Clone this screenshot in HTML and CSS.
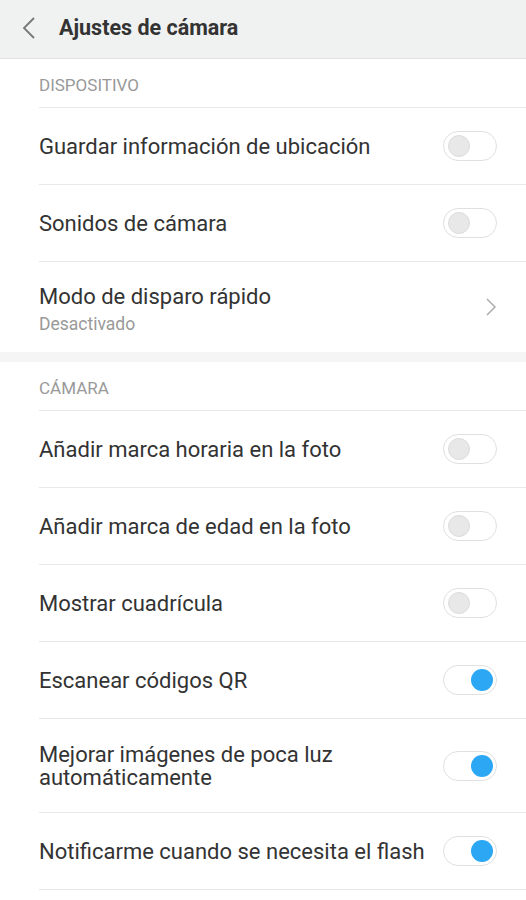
FILE: index.html
```html
<!DOCTYPE html>
<html lang="es">
<head>
  <meta charset="UTF-8">
  <title>Ajustes de cámara</title>
  <link rel="stylesheet" href="styles.css">
</head>
<body>
  <div class="top-bar">
    <svg class="back-icon" width="14" height="22" viewBox="0 0 14 22">
      <path d="M12 1 L2 11 L12 21" fill="none" stroke="#777" stroke-width="1.8"/>
    </svg>
    <h1 class="title">Ajustes de cámara</h1>
  </div>

  <div class="section">
    <div class="section-label">DISPOSITIVO</div>
    <div class="row">
      <span class="row-text">Guardar información de ubicación</span>
      <span class="switch"></span>
    </div>
    <div class="row">
      <span class="row-text">Sonidos de cámara</span>
      <span class="switch"></span>
    </div>
    <div class="row row-tall last">
      <div class="row-stack">
        <div class="row-text">Modo de disparo rápido</div>
        <div class="row-sub">Desactivado</div>
      </div>
      <svg class="chevron" width="10" height="18" viewBox="0 0 10 18">
        <path d="M1 1 L9 9 L1 17" fill="none" stroke="#aaa" stroke-width="1.5"/>
      </svg>
    </div>
  </div>

  <div class="gap"></div>

  <div class="section">
    <div class="section-label">CÁMARA</div>
    <div class="row">
      <span class="row-text">Añadir marca horaria en la foto</span>
      <span class="switch"></span>
    </div>
    <div class="row">
      <span class="row-text">Añadir marca de edad en la foto</span>
      <span class="switch"></span>
    </div>
    <div class="row">
      <span class="row-text">Mostrar cuadrícula</span>
      <span class="switch"></span>
    </div>
    <div class="row">
      <span class="row-text">Escanear códigos QR</span>
      <span class="switch on"></span>
    </div>
    <div class="row row-double">
      <span class="row-text">Mejorar imágenes de poca luz<br>automáticamente</span>
      <span class="switch on"></span>
    </div>
    <div class="row">
      <span class="row-text">Notificarme cuando se necesita el flash</span>
      <span class="switch on"></span>
    </div>
  </div>
</body>
</html>
```

FILE: styles.css
```css
body {
  margin: 0;
  font-family: Roboto, "Noto Sans", sans-serif;
  background: #fff;
  color: #333;
}

.top-bar {
  height: 58px;
  background: #f0f1f1;
  border-bottom: 1px solid #e2e2e2;
  display: flex;
  align-items: center;
}

.back-icon {
  margin-left: 22px;
  margin-top: -2px;
}

.title {
  margin: -4px 0 0 23px;
  font-size: 21.5px;
  font-weight: bold;
  color: #333;
}

.section {
  padding-left: 39px;
}

.section-label {
  height: 45px;
  padding-top: 3px;
  display: flex;
  align-items: center;
  font-size: 17px;
  color: #999;
  border-bottom: 1px solid #e8e8e8;
}

.row {
  height: 76px;
  display: flex;
  align-items: center;
  justify-content: space-between;
  padding-right: 29px;
  border-bottom: 1px solid #e8e8e8;
}

.row.last {
  border-bottom: none;
}

.row-tall {
  height: 90px;
}

.row-stack {
  margin-top: 4px;
}

.row-double {
  height: 93px;
}

.row-text {
  font-size: 22px;
  line-height: 23px;
  color: #333;
}

.row-sub {
  font-size: 17.5px;
  color: #999;
  margin-top: 6px;
}

.chevron {
  margin-right: 1px;
}

.gap {
  height: 10px;
  background: #f5f5f5;
}

.switch {
  position: relative;
  flex: none;
  width: 52px;
  height: 28px;
  border: 1px solid #e0e0e0;
  border-radius: 15px;
  background: #fff;
}

.switch::after {
  content: "";
  position: absolute;
  top: 3px;
  left: 4px;
  width: 22px;
  height: 22px;
  border-radius: 50%;
  background: #e8e8e8;
  border: 1px solid #dcdcdc;
  box-sizing: border-box;
}

.switch.on::after {
  left: auto;
  right: 3px;
  background: #2ba7f4;
  border: none;
}
```
